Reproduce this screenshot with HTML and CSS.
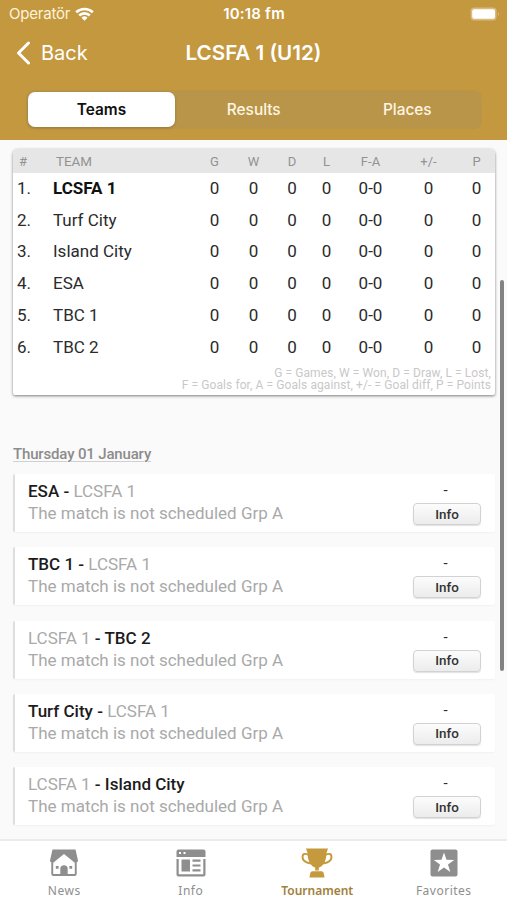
FILE: index.html
```html
<!DOCTYPE html>
<html lang="en">
  <head>
    <meta charset="utf-8" />
    <title>LCSFA 1 (U12)</title>
    <link rel="stylesheet" href="styles.css">
  </head>

  <body>
    <header class="header">
      <div class="status">
        <div class="carrier">
          <span>Operatör</span>
          <svg width="19" height="14" viewBox="0 0 19 14" fill="none" stroke="#fff" stroke-width="2.6">
            <path d="M1.2 5.3a12 12 0 0 1 16.6 0" />
            <path d="M4.2 8.5a7.6 7.6 0 0 1 10.6 0" />
            <path d="M9.5 13.8l-3-3a4.3 4.3 0 0 1 6 0z" fill="#fff" stroke="none" />
          </svg>
        </div>
        <div class="time">10:18 fm</div>
        <div class="battery">
          <svg width="31" height="14" viewBox="0 0 31 14">
            <rect x="0.6" y="0.6" width="26" height="12.8" rx="3.6" fill="#d8bb80" />
            <rect x="2.2" y="2.2" width="22.8" height="9.6" rx="2" fill="#fff" />
            <path d="M28 5v4q2-2 0-4z" fill="#d8bb80" />
          </svg>
        </div>
      </div>
      <div class="nav">
        <a class="back">
          <svg width="15" height="24" viewBox="0 0 15 24" fill="none" stroke="#fff" stroke-width="3" stroke-linecap="round" stroke-linejoin="round">
            <path d="M12.5 2L2.5 12l10 10" />
          </svg>
          <span>Back</span>
        </a>
        <h1>LCSFA 1 (U12)</h1>
      </div>
      <div class="segments">
        <div class="segment active">Teams</div>
        <div class="segment">Results</div>
        <div class="segment">Places</div>
      </div>
    </header>

    <main class="content">
      <div class="standings">
        <table>
          <colgroup>
            <col class="c-pos"><col class="c-team"><col class="c-g"><col class="c-w"><col class="c-d"><col class="c-l"><col class="c-fa"><col class="c-diff"><col class="c-p">
          </colgroup>
          <thead>
            <tr><th class="pos">#</th><th class="team">TEAM</th><th>G</th><th>W</th><th>D</th><th>L</th><th>F-A</th><th>+/-</th><th>P</th></tr>
          </thead>
          <tbody>
            <tr><td class="pos">1.</td><td class="team own">LCSFA 1</td><td>0</td><td>0</td><td>0</td><td>0</td><td>0-0</td><td>0</td><td>0</td></tr>
            <tr><td class="pos">2.</td><td class="team">Turf City</td><td>0</td><td>0</td><td>0</td><td>0</td><td>0-0</td><td>0</td><td>0</td></tr>
            <tr><td class="pos">3.</td><td class="team">Island City</td><td>0</td><td>0</td><td>0</td><td>0</td><td>0-0</td><td>0</td><td>0</td></tr>
            <tr><td class="pos">4.</td><td class="team">ESA</td><td>0</td><td>0</td><td>0</td><td>0</td><td>0-0</td><td>0</td><td>0</td></tr>
            <tr><td class="pos">5.</td><td class="team">TBC 1</td><td>0</td><td>0</td><td>0</td><td>0</td><td>0-0</td><td>0</td><td>0</td></tr>
            <tr><td class="pos">6.</td><td class="team">TBC 2</td><td>0</td><td>0</td><td>0</td><td>0</td><td>0-0</td><td>0</td><td>0</td></tr>
          </tbody>
        </table>
        <p class="legend">G = Games, W = Won, D = Draw, L = Lost,<br>F = Goals for, A = Goals against, +/- = Goal diff, P = Points</p>
      </div>

      <h2><span>Thursday 01 January</span></h2>

      <div class="matches">
        <div class="match">
          <div class="details">
            <div class="teams">ESA - <span>LCSFA 1</span></div>
            <div class="note">The match is not scheduled Grp A</div>
          </div>
          <div class="side"><div class="score">-</div><button>Info</button></div>
        </div>
        <div class="match">
          <div class="details">
            <div class="teams">TBC 1 - <span>LCSFA 1</span></div>
            <div class="note">The match is not scheduled Grp A</div>
          </div>
          <div class="side"><div class="score">-</div><button>Info</button></div>
        </div>
        <div class="match">
          <div class="details">
            <div class="teams"><span>LCSFA 1</span> - TBC 2</div>
            <div class="note">The match is not scheduled Grp A</div>
          </div>
          <div class="side"><div class="score">-</div><button>Info</button></div>
        </div>
        <div class="match">
          <div class="details">
            <div class="teams">Turf City - <span>LCSFA 1</span></div>
            <div class="note">The match is not scheduled Grp A</div>
          </div>
          <div class="side"><div class="score">-</div><button>Info</button></div>
        </div>
        <div class="match">
          <div class="details">
            <div class="teams"><span>LCSFA 1</span> - Island City</div>
            <div class="note">The match is not scheduled Grp A</div>
          </div>
          <div class="side"><div class="score">-</div><button>Info</button></div>
        </div>
      </div>
      <div class="scrollbar"></div>
    </main>

    <nav class="tabbar">
      <a class="tab">
        <svg width="30" height="30" viewBox="0 0 30 30" fill="#8e8e8e">
          <path d="M3.500 1.500h23L29 12.500q0 1.500-1.300 1.500V26q0 2-2 2H4.300q-2 0-2-2V14Q1 14 1 12.500z" />
          <path d="M15 6L25.800 14.800V26H18.700v-5q0-3.700-3.700-3.700T11.300 21v5H4.200V14.800z" fill="#fff" />
          <path d="M12.500 28v-7q0-2.300 2.500-2.300t2.500 2.300v7zM6.800 18h2.800v2.800H6.800zM20.400 18h2.800v2.800h-2.800z" />
        </svg>
        <span>News</span>
      </a>
      <a class="tab">
        <svg width="30" height="30" viewBox="0 0 30 30" fill="#8e8e8e">
          <path fill-rule="evenodd" d="M2.500 1.500h25q2 0 2 2V9H.5V3.500q0-2 2-2z M3 4v2h2V4z M7.500 4v2h2V4z" />
          <path d="M.5 11h2.200v15.300h24.600V11h2.200v15.500q0 2-2 2h-25q-2 0-2-2z" />
          <path d="M5.500 11.500h8.500v12H5.500zM16.500 11.500h8v2.200h-8zM16.500 16.400h8v2.200h-8zM16.500 21.300h8v2.200h-8z" />
        </svg>
        <span>Info</span>
      </a>
      <a class="tab active">
        <svg width="34" height="30" viewBox="0 0 34 30" fill="#c59a3f">
          <path d="M6 .5h22l-1.500 4.500Q26.500 16.500 18.800 19.800v2.700h-3.600v-2.700Q7.500 16.500 7.500 5z" />
          <path d="M9 7Q2.500 4 2.500 9t8.500 6.500M25 7q6.500-3 6.500 2T23 15.500" fill="none" stroke="#c59a3f" stroke-width="2" />
          <path d="M12.500 23.200h9q1.800 0 2.200 1.700l.8 4.600h-15l.8-4.600q.4-1.700 2.200-1.700z" />
        </svg>
        <span>Tournament</span>
      </a>
      <a class="tab">
        <svg width="30" height="30" viewBox="0 0 30 30">
          <rect x="1.500" y="1.500" width="27" height="27" rx="2" fill="#8e8e8e" />
          <path fill="#fff" d="M15 4.500l2.500 7.300 7.700.1-6.200 4.600 2.300 7.400-6.300-4.400-6.300 4.400 2.300-7.400-6.200-4.600 7.700-.1z" />
        </svg>
        <span>Favorites</span>
      </a>
    </nav>
  </body>
</html>
```
FILE: styles.css
```css
* {
  box-sizing: border-box;
}

body {
  margin: 0;
  width: 507px;
  height: 900px;
  overflow: hidden;
  display: flex;
  flex-direction: column;
  background-color: #fafafa;
  color: #2b2b2b;
  font-family: Roboto, sans-serif;
}

.header {
  height: 140px;
  flex: none;
  background-color: #c4983f;
  color: #fff;
  font-family: Inter, sans-serif;
}

.status {
  display: grid;
  grid-template-columns: 1fr auto 1fr;
  align-items: center;
  height: 27px;
  padding: 0 6px 0 7px;
  font-size: 15px;
}

.carrier {
  display: flex;
  align-items: center;
  gap: 5px;
  padding-left: 2px;
  color: #fff3da;
  letter-spacing: -0.2px;
}

.time {
  font-weight: 600;
  letter-spacing: 0.2px;
}

.battery {
  display: flex;
  justify-content: flex-end;
}

.nav {
  display: grid;
  grid-template-columns: 1fr auto 1fr;
  align-items: center;
  height: 51px;
  padding: 0 16px;
}

.back {
  display: flex;
  align-items: center;
  gap: 10px;
  font-size: 20px;
}

h1 {
  margin: 0;
  font-size: 20.6px;
  font-weight: 600;
}

.segments {
  display: flex;
  width: 456px;
  height: 39px;
  margin: 12px 0 0 26px;
  padding: 2px 0 2px 2px;
  background-color: #b99549;
  border-radius: 8px;
}

.segment {
  flex: 1;
  display: flex;
  align-items: center;
  justify-content: center;
  padding-left: 4px;
  font-size: 15.4px;
  font-weight: 500;
  color: #fff6e2;
}

.segment.active {
  flex: 0 0 147px;
  padding-left: 0;
  background-color: #fff;
  color: #111;
  font-weight: 600;
  border-radius: 7px;
  box-shadow: 0 1px 3px rgba(0, 0, 0, 0.2);
}

.content {
  position: relative;
  height: 699px;
  flex: none;
  padding: 9px 12px 0 13px;
  overflow: hidden;
}

.standings {
  height: 246px;
  background-color: #fff;
  border-radius: 5px 5px 2px 2px;
  box-shadow: 0 1px 3px rgba(0, 0, 0, 0.5);
}

table {
  width: 482px;
  table-layout: fixed;
  border-collapse: collapse;
}

.c-pos { width: 36px; }
.c-team { width: 146px; }
.c-g, .c-w { width: 39px; }
.c-d { width: 38px; }
.c-l { width: 31px; }
.c-fa { width: 57px; }
.c-diff { width: 59px; }
.c-p { width: 37px; }

th {
  height: 24px;
  padding: 0;
  background-color: #e6e6e6;
  color: #929292;
  font-size: 13px;
  font-weight: 400;
}

th:first-child {
  border-top-left-radius: 5px;
}

th:last-child {
  border-top-right-radius: 5px;
}

td {
  height: 31.75px;
  padding: 0 0 2px;
  text-align: center;
  font-size: 17px;
}

.pos {
  padding-left: 4px;
  text-align: left;
}

th.pos {
  padding-left: 6px;
}

.team {
  padding-left: 4px;
  text-align: left;
}

th.team {
  padding-left: 7px;
  font-size: 13.4px;
}

.own {
  font-weight: 700;
  color: #111;
}

.legend {
  margin: 3px 4px 0 0;
  text-align: right;
  font-size: 12px;
  line-height: 12.5px;
  letter-spacing: 0.09px;
  color: #c8c8c8;
}

h2 {
  margin: 51px 0 0;
  height: 28px;
  font-size: 15px;
  line-height: 16px;
  font-weight: 500;
  letter-spacing: -0.16px;
  color: #8c8c8c;
}

h2 span {
  text-decoration: underline #d0d0d0 1px;
  text-underline-offset: 2px;
}

.matches {
  display: flex;
  flex-direction: column;
  gap: 15.3px;
}

.match {
  display: flex;
  justify-content: space-between;
  height: 58px;
  padding: 7px 14px 0 13px;
  background-color: #fff;
  border-left: 2px solid #dedede;
  border-radius: 2px;
  box-shadow: 0 1px 2px rgba(0, 0, 0, 0.04);
}

.teams,
.note {
  font-size: 17px;
  line-height: 22px;
  white-space: nowrap;
}

.teams {
  line-height: 21px;
  font-weight: 500;
  color: #1c1c1c;
}

.teams span,
.note {
  font-weight: 400;
  color: #a9a9a9;
}

.side {
  width: 68px;
}

.score {
  height: 22px;
  padding-right: 3px;
  text-align: center;
  font-size: 15px;
  line-height: 18px;
}

button {
  display: block;
  width: 68px;
  height: 22px;
  padding: 0;
  border: 1px solid #d2d2d2;
  border-radius: 4px;
  background: linear-gradient(#fcfcfc, #ececec);
  box-shadow: 0 1px 1px rgba(0, 0, 0, 0.12);
  font-family: Roboto, sans-serif;
  font-size: 13.4px;
  font-weight: 500;
  color: #333;
}

.scrollbar {
  position: absolute;
  top: 140px;
  right: 3px;
  width: 4px;
  height: 391px;
  border-radius: 2px;
  background-color: #828282;
}

.tabbar {
  display: flex;
  flex: 1;
  padding-left: 1px;
  border-top: 2px solid #ececec;
  background-color: #fff;
}

.tab {
  flex: 1;
  display: flex;
  flex-direction: column;
  align-items: center;
  padding-top: 7px;
  font-family: "Noto Sans", sans-serif;
  font-size: 12px;
  line-height: 18px;
  letter-spacing: 0.5px;
  color: #8e8e8e;
}

.tab span {
  margin-top: 4px;
}

.tab.active {
  color: #a2803c;
  font-weight: 600;
  letter-spacing: 0;
}
```
